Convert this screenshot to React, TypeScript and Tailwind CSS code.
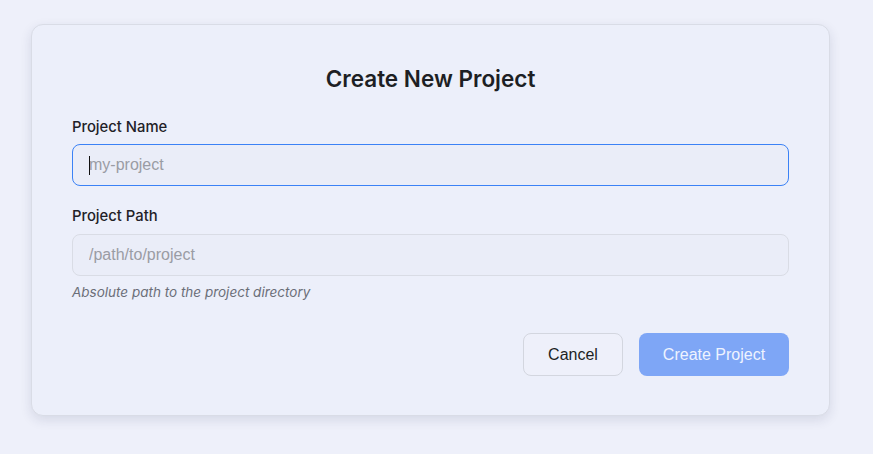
import { useState } from 'react';

export default function App() {
  const [name, setName] = useState('');
  const [path, setPath] = useState('');

  return (
    <div className="min-h-screen w-full bg-[#eef0fa] pl-[31px] pt-6 font-['Inter',sans-serif]">
      <div className="w-[799px] rounded-xl border border-[#d9dce6] bg-[#eceffa] px-10 pt-10 pb-[39px] shadow-[0_4px_12px_rgba(30,40,80,0.12)]">
        <h2 className="mb-6 text-center text-[22.5px] font-semibold leading-7 text-[#1d1f24]">
          Create New Project
        </h2>

        <label className="mb-[7px] block text-[14.8px] font-medium leading-5 text-[#1f2127]">
          Project Name
        </label>
        <div className="relative">
          <input
            autoFocus
            value={name}
            onChange={(e) => setName(e.target.value)}
            placeholder="my-project"
            className="h-[42px] w-full rounded-lg border border-[#3b82f6] bg-[#eaedf8] px-4 font-['Liberation_Sans',sans-serif] text-base text-[#1d1f24] caret-[#111] outline-none placeholder:text-[#9a9ca4]"
          />
          {!name && (
            <span className="pointer-events-none absolute left-[17px] top-[12px] h-[19px] w-px bg-[#111]" />
          )}
        </div>

        <label className="mt-5 mb-2 block text-[14.8px] font-medium leading-5 text-[#1f2127]">
          Project Path
        </label>
        <input
          value={path}
          onChange={(e) => setPath(e.target.value)}
          placeholder="/path/to/project"
          className="h-[42px] w-full rounded-lg border border-[#d9dce5] bg-[#eaedf8] px-4 font-['Liberation_Sans',sans-serif] text-base text-[#1d1f24] outline-none placeholder:text-[#9a9ca4]"
        />
        <p className="mt-2 text-[13.5px] italic leading-4 text-[#6b6e78]">
          Absolute path to the project directory
        </p>

        <div className="mt-[33px] flex justify-end gap-4">
          <button className="h-[43px] w-[100px] rounded-lg border border-[#d3d6df] bg-[#eef0fa] font-['Liberation_Sans',sans-serif] text-base text-[#1d1f24]">
            Cancel
          </button>
          <button
            disabled={!name.trim() || !path.trim()}
            className="h-[43px] w-[150px] rounded-lg bg-[#7ea6f6] font-['Liberation_Sans',sans-serif] text-base text-[#eef3ff]"
          >
            Create Project
          </button>
        </div>
      </div>
    </div>
  );
}
